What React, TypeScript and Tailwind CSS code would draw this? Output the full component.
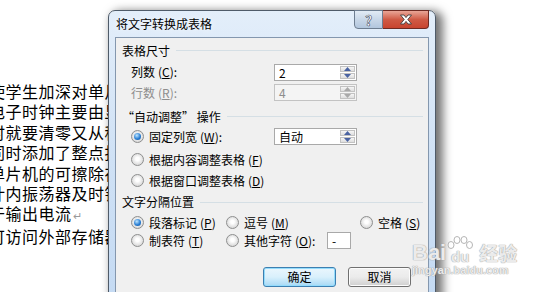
import React from "react";

const docLines = [
  "使学生加深对单片机",
  "电子时钟主要由显示",
  "时就要清零又从秒开",
  "同时添加了整点报时",
  "单片机的可擦除存",
  "计内振荡器及时钟",
  "于输出电流",
  "可访问外部存储器",
];

const Radio = ({ checked }: { checked?: boolean }) => (
  <span className="flex size-[13px] shrink-0 items-center justify-center rounded-full border border-[#8e8f8f] bg-[radial-gradient(circle_at_50%_45%,#ffffff_20%,#e6e6e6_55%,#c9c9c9)]">
    {checked && (
      <span className="size-[7px] rounded-full bg-[radial-gradient(circle_at_40%_35%,#bfe6ff,#2a7fd4_55%,#0b4c96)]" />
    )}
  </span>
);

const Arrow = ({ up, disabled }: { up?: boolean; disabled?: boolean }) => (
  <svg width="7" height="4" viewBox="0 0 7 4">
    <path
      d={up ? "M0 4 L3.5 0 L7 4 Z" : "M0 0 L3.5 4 L7 0 Z"}
      fill={disabled ? "#a9a9a9" : "#4a63a2"}
    />
  </svg>
);

const Spin = ({ value, disabled }: { value: string; disabled?: boolean }) => (
  <div
    className={
      disabled
        ? "flex h-[17px] w-[83px] border border-[#c3c3c3] bg-[#f4f4f4] text-[#8d8d8d]"
        : "flex h-[17px] w-[83px] border border-[#a9a9a9] bg-white text-black"
    }
  >
    <div className="flex-1 pl-[4px] text-[12px] leading-[15px]">{value}</div>
    <div className="flex w-[16px] flex-col gap-[1px] py-[1px] pr-[1px]">
      <div className="flex flex-1 items-center justify-center border border-[#c2c2c2] bg-gradient-to-b from-[#f6f6f6] to-[#dedede]">
        <Arrow up disabled={disabled} />
      </div>
      <div className="flex flex-1 items-center justify-center border border-[#c2c2c2] bg-gradient-to-b from-[#f6f6f6] to-[#dedede]">
        <Arrow disabled={disabled} />
      </div>
    </div>
  </div>
);

const Group = ({ title, h }: { title: string; h: string }) => (
  <div className={`flex items-center gap-[6px] pl-[6px] pr-[5px] ${h}`}>
    <span className="whitespace-nowrap">{title}</span>
    <span className="h-px flex-1 bg-[#d5dfe5]" />
  </div>
);

const Key = ({ k }: { k: string }) => (
  <span className="ml-[3px]">
    (<span className="underline">{k}</span>)
  </span>
);

export default function App() {
  return (
    <div className="relative h-[292px] w-[539px] overflow-hidden bg-white font-['Noto_Sans_CJK_SC','Liberation_Sans',sans-serif]">
      {/* document text, cut where the dialog starts */}
      <div className="flex w-[108px] flex-col overflow-hidden pt-[81px] text-[16px] leading-[20.4px] tracking-[0.5px] text-black">
        {docLines.map((l, i) => (
          <div key={i} className="-ml-[11px] whitespace-nowrap">
            {l}
            {i === 6 && <span className="ml-[1px] text-[11px] text-[#9a9a9a]">↵</span>}
          </div>
        ))}
      </div>

      {/* dialog window */}
      <div className="absolute left-[108px] top-[10px] flex h-[300px] w-[328px] flex-col rounded-t-[7px] border border-[#4f5b69] bg-gradient-to-b from-[#e3eefa] via-[#cfe1f5] to-[#c4daf3] px-[6px] shadow-[5px_3px_10px_2px_rgba(0,0,0,0.55)]">
        <div className="flex h-[26px] items-start justify-between">
          <span className="pl-[1px] pt-[5px] text-[12px] leading-[16px] text-black [text-shadow:0_0_6px_#ffffff]">
            将文字转换成表格
          </span>
          <div className="-mt-px flex h-[19px]">
            <div className="flex w-[29px] items-center justify-center rounded-bl-[4px] border border-[#6d7d90] bg-gradient-to-b from-[#e2ebf5] via-[#c8d7e8] to-[#b2c6dd] text-[14px] font-bold leading-none text-white [-webkit-text-stroke:0.6px_#3b4658]">
              ?
            </div>
            <div className="flex w-[46px] items-center justify-center rounded-br-[4px] border border-l-0 border-[#6e2a22] bg-gradient-to-b from-[#e8a597] via-[#cf5a45] to-[#c8442f]">
              <svg width="14" height="11" viewBox="0 0 14 11">
                <path
                  d="M1.5 1 L5 1 L7 3.6 L9 1 L12.5 1 L8.8 5.5 L12.5 10 L9 10 L7 7.4 L5 10 L1.5 10 L5.2 5.5 Z"
                  fill="#ffffff"
                  stroke="#3d3d3d"
                  strokeWidth="0.9"
                />
              </svg>
            </div>
          </div>
        </div>

        {/* client area */}
        <div className="flex flex-1 flex-col border border-[#8497ae] bg-[#f0f0f0] text-[12px] leading-[16px] text-black">
          <Group title="表格尺寸" h="h-[25px]" />
          <div className="flex h-[18px] items-center pl-[15px]">
            <span className="w-[143px]">
              列数<Key k="C" />:
            </span>
            <Spin value="2" />
          </div>
          <div className="mt-[3px] flex h-[17px] items-center pl-[15px] text-[#8d8d8d]">
            <span className="w-[143px]">
              行数<Key k="R" />:
            </span>
            <Spin value="4" disabled />
          </div>
          <Group title="“自动调整” 操作" h="mt-[4px] h-[23px]" />
          <div className="flex h-[17px] items-center pl-[15px]">
            <span className="flex w-[143px] items-center gap-[5px]">
              <Radio checked />
              <span>
                固定列宽<Key k="W" />:
              </span>
            </span>
            <Spin value="自动" />
          </div>
          <div className="mt-[4px] flex h-[21px] items-center gap-[5px] pl-[15px]">
            <Radio />
            <span>
              根据内容调整表格<Key k="F" />
            </span>
          </div>
          <div className="flex h-[21px] items-center gap-[5px] pl-[15px]">
            <Radio />
            <span>
              根据窗口调整表格<Key k="D" />
            </span>
          </div>
          <Group title="文字分隔位置" h="h-[22px]" />
          <div className="flex h-[19px] items-center pl-[15px]">
            <span className="flex w-[95px] items-center gap-[5px]">
              <Radio checked />
              <span>
                段落标记<Key k="P" />
              </span>
            </span>
            <span className="flex w-[134px] items-center gap-[5px]">
              <Radio />
              <span>
                逗号<Key k="M" />
              </span>
            </span>
            <span className="flex items-center gap-[5px]">
              <Radio />
              <span>
                空格<Key k="S" />
              </span>
            </span>
          </div>
          <div className="flex h-[17px] items-center pl-[15px]">
            <span className="flex w-[95px] items-center gap-[5px]">
              <Radio />
              <span>
                制表符<Key k="T" />
              </span>
            </span>
            <span className="flex w-[101px] items-center gap-[5px]">
              <Radio />
              <span>
                其他字符<Key k="O" />:
              </span>
            </span>
            <div className="h-[17px] w-[24px] border border-[#a9a9a9] bg-white pl-[4px] leading-[15px]">-</div>
          </div>
          <div className="mt-[18px] flex gap-[12px] pl-[147px]">
            <div className="flex h-[20px] w-[73px] items-center justify-center rounded-[3px] border border-[#3c7fb1] bg-gradient-to-b from-[#eaf6fd] via-[#d9f0fc] to-[#a7d9f5] shadow-[inset_0_0_0_1px_#94dcfc]">
              确定
            </div>
            <div className="flex h-[20px] w-[63px] items-center justify-center rounded-[3px] border border-[#707070] bg-gradient-to-b from-[#f2f2f2] via-[#ebebeb] to-[#cfcfcf] shadow-[inset_0_0_0_1px_#fcfcfc]">
              取消
            </div>
          </div>
        </div>
      </div>

      {/* baidu watermark */}
      <div className="absolute left-[412px] top-[236px] flex flex-col text-white/80 [text-shadow:0_0_1px_#9a9a9a,0_0_1px_#9a9a9a]">
        <div className="flex items-end">
          <span className="font-['Liberation_Sans',sans-serif] text-[22px] font-bold leading-[26px]">Bai</span>
          <span className="relative ml-[1px] flex h-[30px] w-[26px] items-end justify-center">
            <svg className="absolute left-0 top-0" width="26" height="14" viewBox="0 0 26 14">
              <g fill="#ffffff" fillOpacity="0.75" stroke="#b5b5b5" strokeWidth="1">
                <ellipse cx="4" cy="9" rx="3" ry="3.5" />
                <ellipse cx="10" cy="4" rx="3" ry="3.5" />
                <ellipse cx="17" cy="4" rx="3" ry="3.5" />
                <ellipse cx="22.5" cy="9" rx="3" ry="3.5" />
              </g>
            </svg>
            <span className="font-['Liberation_Sans',sans-serif] text-[15px] font-bold leading-[18px]">du</span>
          </span>
          <span className="ml-[6px] text-[19px] font-bold leading-[26px]">经验</span>
        </div>
        <span className="-mt-[2px] font-['Liberation_Sans',sans-serif] text-[11px] font-bold leading-[13px]">
          jingyan.baidu.com
        </span>
      </div>
    </div>
  );
}
